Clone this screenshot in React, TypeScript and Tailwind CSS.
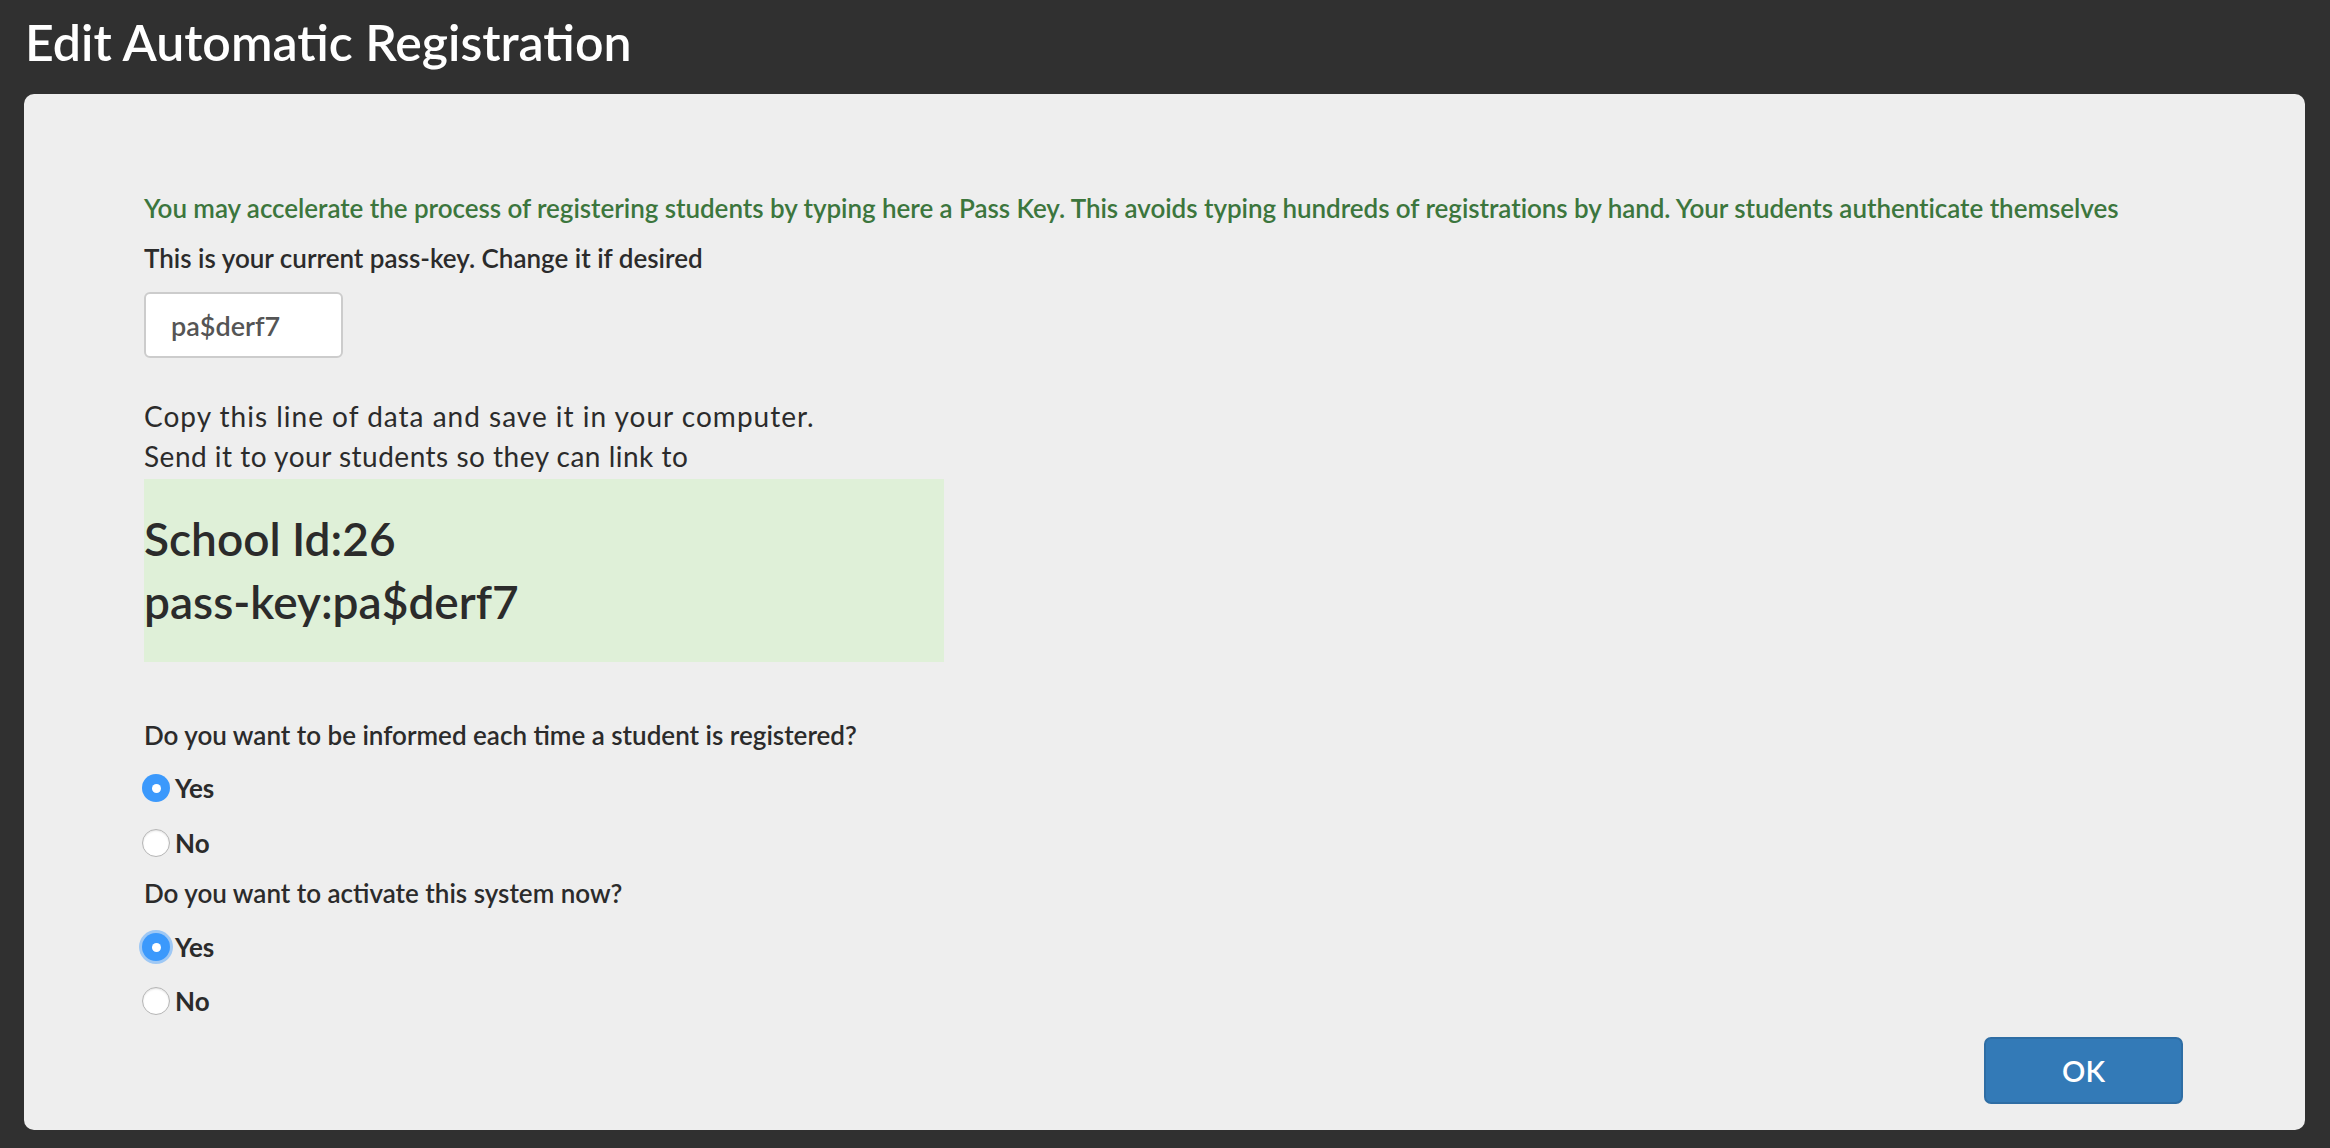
import React from "react";

function Radio({ checked, focus, label }: { checked: boolean; focus?: boolean; label: string }) {
  return (
    <div className="flex h-[40px] items-center">
      <span
        className={
          checked
            ? focus
              ? "relative ml-[-2px] flex h-[28px] w-[28px] items-center justify-center rounded-full bg-[#3b99fc] shadow-[0_0_0_3px_rgba(59,153,252,0.45)]"
              : "relative ml-[-2px] flex h-[28px] w-[28px] items-center justify-center rounded-full bg-[#3b99fc]"
            : "relative ml-[-2px] flex h-[28px] w-[28px] items-center justify-center rounded-full border border-[#b5b5b5] bg-white shadow-[inset_0_1px_2px_rgba(0,0,0,0.12)]"
        }
      >
        {checked && <span className="h-[9px] w-[9px] rounded-full bg-white" />}
      </span>
      <span className="ml-[5px] text-[26px] font-bold leading-[32px] text-[#2b2b2b]">{label}</span>
    </div>
  );
}

export default function App() {
  return (
    <div className="flex h-[1148px] w-[2330px] flex-col bg-[#303030] font-['Lato',_'Noto_Sans',_sans-serif]">
      <div className="h-[94px] shrink-0 pl-[25px] pt-[12px]">
        <h1 className="text-[50px] font-semibold leading-[60px] text-white">Edit Automatic Registration</h1>
      </div>
      <div className="ml-[24px] mr-[25px] flex h-[1036px] flex-col rounded-[10px] bg-[#eeeeee] pl-[120px]">
        <p className="mt-[98px] text-[26px] font-semibold leading-[32px] tracking-[-0.05px] text-[#3c763d]">
          You may accelerate the process of registering students by typing here a Pass Key. This avoids typing hundreds of registrations by hand. Your students authenticate themselves
        </p>
        <p className="mt-[18px] text-[26px] font-semibold leading-[32px] text-[#2b2b2b]">
          This is your current pass-key. Change it if desired
        </p>
        <input
          readOnly
          value="pa$derf7"
          className="mt-[18px] h-[66px] w-[199px] rounded-[6px] border-2 border-[#cccccc] bg-white pl-[25px] text-[27px] font-semibold text-[#555555] outline-none"
        />
        <div className="mt-[38px] text-[28px] leading-[40px] tracking-[0.5px] text-[#2b2b2b]">
          <p className="tracking-[1px]">Copy this line of data and save it in your computer.</p>
          <p>Send it to your students so they can link to</p>
        </div>
        <div className="mt-[3px] h-[183px] w-[800px] bg-[#dff0d8] pt-[28px] text-[46px] font-semibold leading-[63px] text-[#2b2b2b]">
          <p>School Id:26</p>
          <p>pass-key:pa$derf7</p>
        </div>
        <p className="mt-[57px] text-[26px] font-semibold leading-[32px] text-[#2b2b2b]">
          Do you want to be informed each time a student is registered?
        </p>
        <div className="mt-[17px]">
          <Radio checked label="Yes" />
        </div>
        <div className="mt-[15px]">
          <Radio checked={false} label="No" />
        </div>
        <p className="mt-[14px] text-[26px] font-semibold leading-[32px] text-[#2b2b2b]">
          Do you want to activate this system now?
        </p>
        <div className="mt-[18px]">
          <Radio checked focus label="Yes" />
        </div>
        <div className="mt-[14px]">
          <Radio checked={false} label="No" />
        </div>
        <div className="mt-[16px] flex justify-end pr-[122px]">
          <button className="h-[67px] w-[199px] rounded-[7px] border-2 border-[#2e6da4] bg-[#337ab7] text-[29px] font-semibold text-white">
            OK
          </button>
        </div>
      </div>
    </div>
  );
}
